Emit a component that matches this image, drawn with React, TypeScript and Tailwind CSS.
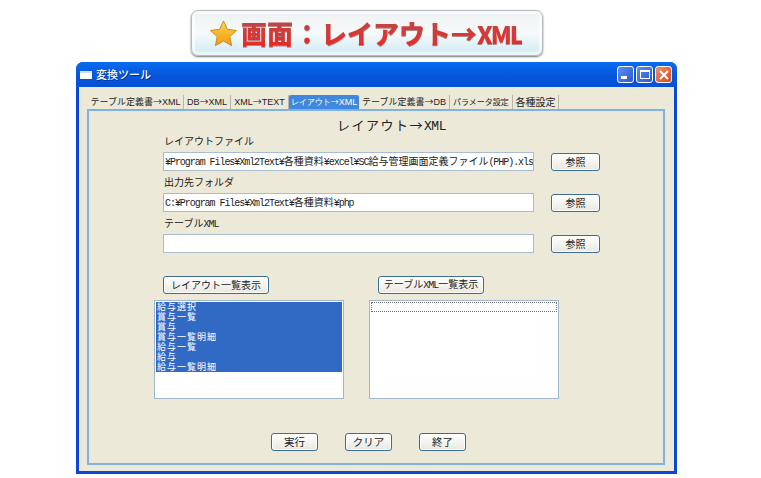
import type { ReactNode } from "react";

const tabs = [
  { label: "テーブル定義書→XML", width: "w-[96px]", cjk: "text-[9px]" },
  { label: "DB→XML", width: "w-[47px]", cjk: "text-[9px]" },
  { label: "XML→TEXT", width: "w-[58px]", cjk: "text-[9px]" },
  { label: "レイアウト→XML", width: "w-[70px]", cjk: "text-[8px]", active: true },
  { label: "テーブル定義書→DB", width: "w-[91px]", cjk: "text-[9px]" },
  { label: "パラメータ設定", width: "w-[63px]", cjk: "text-[8px]" },
  { label: "各種設定", width: "w-[46px]", cjk: "text-[10px]" },
];

const rows = ["給与選択", "賞与一覧", "賞与", "賞与一覧明細", "給与一覧", "給与", "給与一覧明細"];

// latin runs get their own narrow style, kana and kanji stay full width
function Mixed({ text, latin, cjk = "" }: { text: string; latin: string; cjk?: string }) {
  return (
    <span className="whitespace-nowrap">
      {text.split(/([\x20-\x7e¥]+)/).map((part, i) =>
        i % 2 === 1 ? (
          <span key={i} className={latin}>
            {part}
          </span>
        ) : (
          <span key={i} className={cjk}>
            {part}
          </span>
        ),
      )}
    </span>
  );
}

const halfWidth = "font-['Liberation_Mono',monospace] tracking-[-1px]";

function XpButton({ children, className }: { children: ReactNode; className: string }) {
  return (
    <button className={`flex h-[18px] items-center justify-center rounded-[3px] border border-[#3c6d95] bg-gradient-to-b from-white to-[#e9e8e0] leading-none text-[#222] shadow-[inset_0_0_0_1px_#fff] ${className}`}>
      {children}
    </button>
  );
}

function Field({ label, value }: { label: string; value?: string }) {
  return (
    <div className="ml-[74px] flex flex-col">
      <div className="ml-[1px] h-[17px] text-[10px] leading-[11px] text-[#222]">
        <Mixed text={label} latin={halfWidth} />
      </div>
      <div className="flex items-center">
        <div className="flex h-[19px] w-[371px] items-center overflow-hidden border border-[#a9bdd0] bg-white pl-[1px] text-[10px] text-[#222]">
          {value ? <Mixed text={value} latin="font-['Liberation_Mono',monospace] tracking-[-1.05px]" /> : null}
        </div>
        <XpButton className="ml-[17px] w-[49px] text-[10px]">参照</XpButton>
      </div>
    </div>
  );
}

export default function App() {
  return (
    <div className="h-[478px] w-[761px] overflow-hidden bg-white font-['Noto_Sans_CJK_JP',sans-serif]">
      <div className="ml-[191px] flex h-[56px] items-start pt-[10px]">
        <div className="flex h-[46px] w-[352px] items-center rounded-[7px] border border-[#b5bcc0] bg-gradient-to-b from-[#eef1f2] via-[#f6fafb] to-[#cfeaf3] pl-[17px] shadow-[0_1px_2px_#777,inset_0_0_0_3px_rgba(255,255,255,0.6)]">
          <svg viewBox="0 0 30 30" className="h-[29px] w-[29px] shrink-0">
            <defs>
              <linearGradient id="star" x1="0" y1="0" x2="0" y2="1">
                <stop offset="0" stopColor="#ffd34d" />
                <stop offset="1" stopColor="#f39a12" />
              </linearGradient>
            </defs>
            <path d="M15 2l4 8.7 9.5 1.1-7 6.4 1.9 9.4-8.4-4.8-8.4 4.8 1.9-9.4-7-6.4 9.5-1.1z" fill="url(#star)" stroke="#c98a1c" strokeWidth="1" />
          </svg>
          <div className="ml-[3px] flex items-baseline bg-gradient-to-b from-[#b84848] to-[#f01c1c] bg-clip-text text-[26px] font-black leading-[34px] whitespace-nowrap text-transparent drop-shadow-[0_1px_0_rgba(120,30,30,0.5)]">
            <span>画面</span>
            <span className="mx-[1px]">：</span>
            <span>レイアウト→</span>
            <span className="text-[24px] tracking-[-2px]">XML</span>
          </div>
        </div>
      </div>

      <div className="mt-[6px] ml-[76px] w-[601px] overflow-hidden rounded-t-[7px] bg-[#0a47d8]">
        <div className="flex h-[25px] items-center bg-gradient-to-b from-[#0a6cf0] via-[#0657dc] to-[#0450d4] pr-[5px] pl-[4px]">
          <div className="h-[8px] w-[12px] border-t-[2px] border-[#cfe0f8] bg-white" />
          <span className="ml-[4px] text-[11px] font-medium text-white [text-shadow:1px_1px_0_#0a2f9c]">変換ツール</span>
          <div className="ml-auto flex gap-[2px]">
            <div className="flex h-[17px] w-[17px] items-end rounded-[3px] border border-white bg-gradient-to-br from-[#5f8ff0] to-[#2a58d0] pb-[3px] pl-[3px]">
              <div className="h-[3px] w-[6px] bg-white" />
            </div>
            <div className="flex h-[17px] w-[17px] items-center justify-center rounded-[3px] border border-white bg-gradient-to-br from-[#5f8ff0] to-[#2a58d0]">
              <div className="h-[9px] w-[10px] border border-t-[2px] border-white" />
            </div>
            <div className="flex h-[17px] w-[17px] items-center justify-center rounded-[3px] border border-white bg-gradient-to-br from-[#f0906a] to-[#d8431a]">
              <svg viewBox="0 0 10 10" className="h-[10px] w-[10px]">
                <path d="M1 1l8 8M9 1l-8 8" stroke="white" strokeWidth="2" />
              </svg>
            </div>
          </div>
        </div>

        <div className="mx-[3px] mb-[3px] h-[384px] bg-[#ece9d8] pt-[8px]">
          <div className="ml-[9px] flex h-[14px] items-stretch">
            {tabs.map((tab) => (
              <div
                key={tab.label}
                className={`flex items-center justify-center text-[9px] leading-[12px] ${tab.width} ${
                  tab.active ? "rounded-t-[2px] bg-[#3f88dd] text-white" : "border-r border-[#b8b5a4] text-[#222]"
                }`}
              >
                <Mixed text={tab.label} latin="font-['Liberation_Sans',sans-serif]" cjk={tab.cjk} />
              </div>
            ))}
          </div>

          <div className="ml-[8px] h-[356px] w-[578px] border-2 border-[#7fb0e6]">
            <div className="flex h-[24px] items-end justify-center pl-[31px] text-[13px] leading-[16px] text-[#222]">
              <Mixed text="レイアウト→XML" latin="font-['Liberation_Mono',monospace] tracking-[-0.5px]" cjk="tracking-[1.5px]" />
            </div>
            <div className="flex flex-col gap-[5px]">
              <Field label="レイアウトファイル" value="¥Program Files¥Xml2Text¥各種資料¥excel¥SC給与管理画面定義ファイル(PHP).xls" />
              <Field label="出力先フォルダ" value="C:¥Program Files¥Xml2Text¥各種資料¥php" />
              <Field label="テーブルXML" />
            </div>

            <div className="mt-[23px] ml-[74px] flex gap-[109px] text-[10px]">
              <XpButton className="w-[106px]">
                <Mixed text="レイアウト一覧表示" latin={halfWidth} />
              </XpButton>
              <XpButton className="w-[106px]">
                <Mixed text="テーブルXML一覧表示" latin={halfWidth} />
              </XpButton>
            </div>

            <div className="mt-[6px] ml-[65px] flex gap-[25px]">
              <div className="h-[99px] w-[190px] border border-[#9fb6cc] bg-white p-px">
                <div className="bg-[#316ac5] pl-px text-[9px] leading-[10px] tracking-[1px] text-white">
                  {rows.map((row, i) => (
                    <div key={i}>{row}</div>
                  ))}
                </div>
              </div>
              <div className="h-[99px] w-[190px] border border-[#9fb6cc] bg-white p-px">
                <div className="h-[10px] border border-dotted border-[#777]" />
              </div>
            </div>

            <div className="mt-[34px] ml-[182px] flex gap-[27px] text-[10.5px]">
              <XpButton className="w-[47px]">実行</XpButton>
              <XpButton className="w-[47px]">クリア</XpButton>
              <XpButton className="w-[47px]">終了</XpButton>
            </div>
          </div>
        </div>
      </div>
    </div>
  );
}
